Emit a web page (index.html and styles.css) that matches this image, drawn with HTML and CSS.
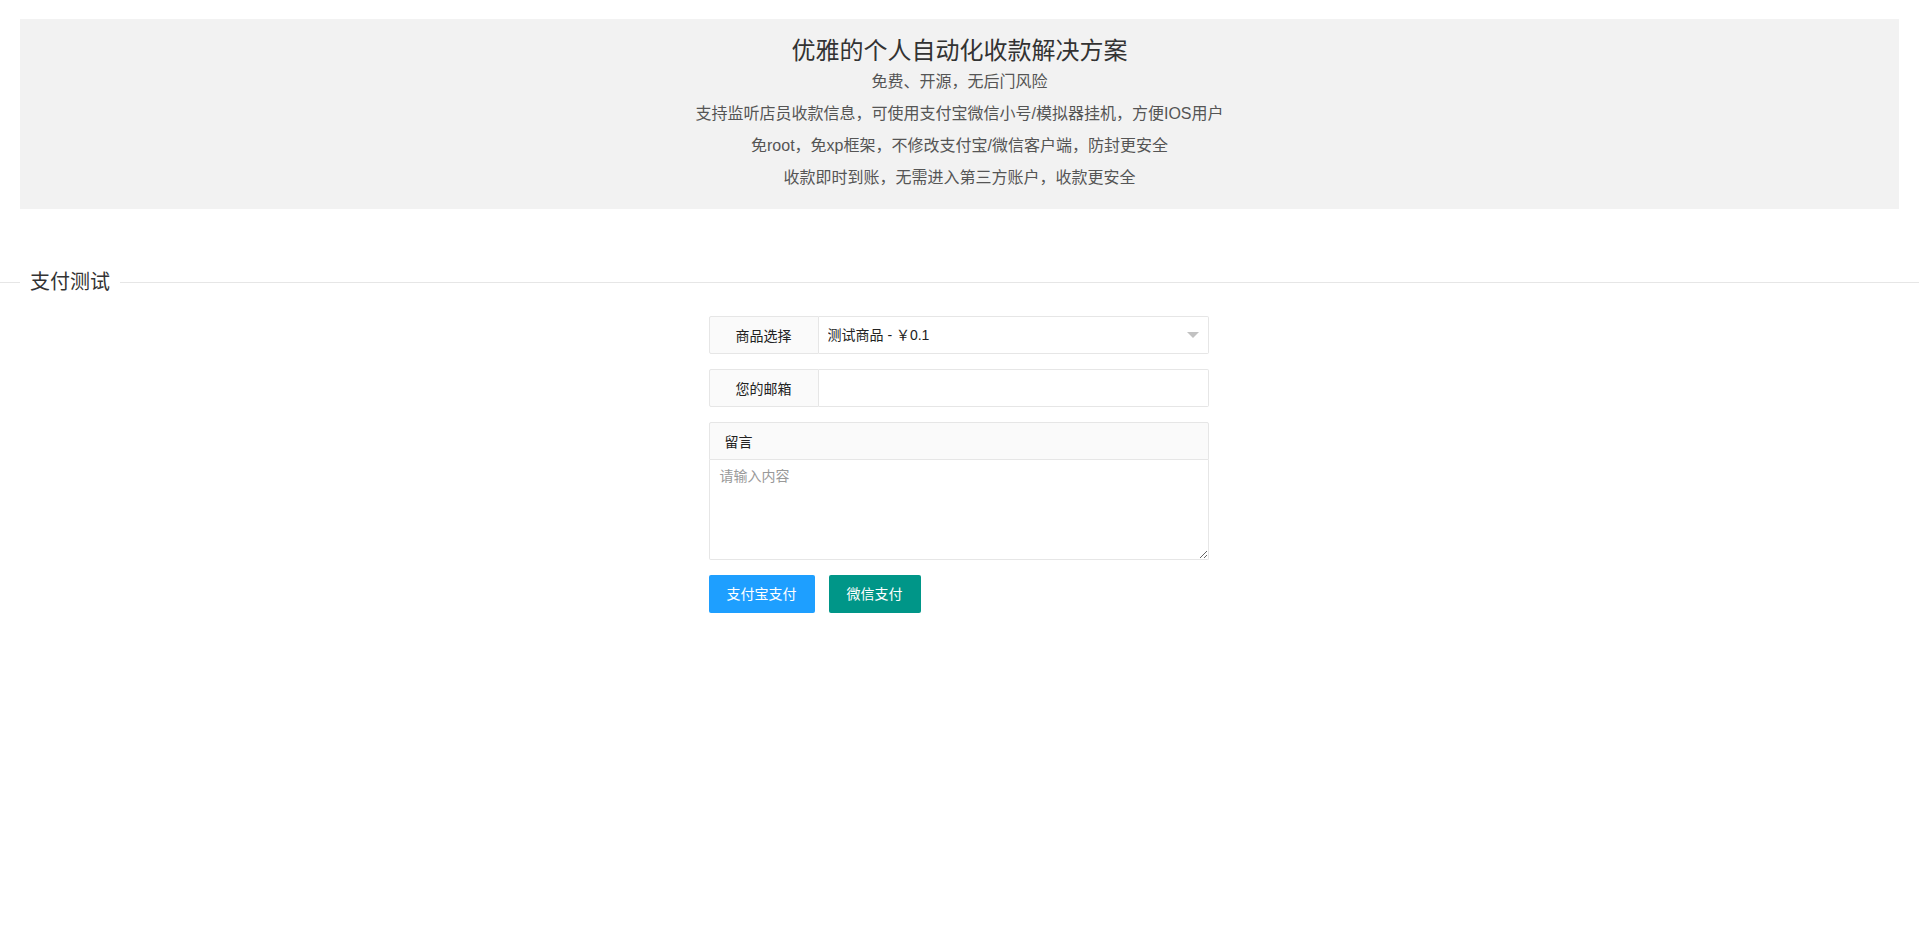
FILE: index.html
```html
<!DOCTYPE html>
<html lang="zh-CN">
<head>
    <meta charset="UTF-8">
    <title>支付测试</title>
    <link rel="stylesheet" href="styles.css">
</head>
<body>

<div class="intro">
    <h2>优雅的个人自动化收款解决方案</h2>
    <p>免费、开源，无后门风险</p>
    <p>支持监听店员收款信息，可使用支付宝微信小号/模拟器挂机，方便IOS用户</p>
    <p>免root，免xp框架，不修改支付宝/微信客户端，防封更安全</p>
    <p>收款即时到账，无需进入第三方账户，收款更安全</p>
</div>

<fieldset class="field-title">
    <legend>支付测试</legend>
</fieldset>

<form class="pay-form" action="#">
    <div class="form-item">
        <label class="form-label">商品选择</label>
        <div class="input-block select-wrap">
            <select name="goods" class="input">
                <option value="1">测试商品 - ￥0.1</option>
            </select>
            <i class="edge"></i>
        </div>
    </div>
    <div class="form-item">
        <label class="form-label">您的邮箱</label>
        <div class="input-block">
            <input type="text" name="email" class="input" autocomplete="off">
        </div>
    </div>
    <div class="form-item form-text">
        <label class="form-label">留言</label>
        <textarea name="remark" class="textarea" placeholder="请输入内容"></textarea>
    </div>
    <div class="form-buttons">
        <button type="button" class="btn btn-normal">支付宝支付</button>
        <button type="button" class="btn">微信支付</button>
    </div>
</form>

</body>
</html>
```

FILE: styles.css
```css
* {
    box-sizing: border-box;
}

body {
    margin: 0;
    font-family: "Liberation Sans", "Noto Sans CJK SC", sans-serif;
    font-size: 14px;
    color: #333;
}

.intro {
    margin: 19px 20px 0;
    padding: 15px;
    background: #f2f2f2;
    text-align: center;
    color: #555;
}

.intro h2 {
    margin: 0;
    padding-top: 2px;
    font-size: 24px;
    font-weight: 400;
    line-height: 30px;
    color: #333;
}

.intro p {
    margin: 0;
    font-size: 16px;
    line-height: 32px;
}

.field-title {
    margin: 58px 0 19px;
    padding: 0;
    border: 0;
    border-top: 1px solid #e6e6e6;
}

.field-title legend {
    margin-left: 20px;
    padding: 0 10px;
    font-size: 20px;
    font-weight: 400;
    line-height: 30px;
    color: #333;
}

.pay-form {
    width: 500px;
    margin-left: calc(50% - 251px);
}

.form-item {
    display: flex;
    margin-bottom: 15px;
}

.form-label {
    width: 110px;
    height: 38px;
    padding: 9px 15px;
    line-height: 20px;
    text-align: center;
    background: #fafafa;
    border: 1px solid #e6e6e6;
    border-radius: 2px 0 0 2px;
    color: #222;
}

.input-block {
    flex: 1;
    position: relative;
}

.input {
    display: block;
    width: 100%;
    height: 38px;
    padding: 0 10px;
    border: 1px solid #e6e6e6;
    border-left: 0;
    border-radius: 0 2px 2px 0;
    background: #fff;
    font-family: inherit;
    font-size: 14px;
    color: #222;
    outline: none;
}

select.input {
    -webkit-appearance: none;
    appearance: none;
    padding-left: 9px;
}

.edge {
    position: absolute;
    right: 10px;
    top: 16px;
    width: 0;
    height: 0;
    border-width: 6px 6px 0;
    border-style: solid;
    border-color: #c2c2c2 transparent transparent;
    pointer-events: none;
}

.form-text {
    flex-direction: column;
}

.form-text .form-label {
    width: 100%;
    text-align: left;
    border-radius: 2px 2px 0 0;
}

.textarea {
    display: block;
    width: 100%;
    height: 100px;
    padding: 6px 10px;
    line-height: 20px;
    border: 1px solid #e6e6e6;
    border-top: 0;
    border-radius: 0 0 2px 2px;
    font-family: inherit;
    font-size: 14px;
    color: #333;
    outline: none;
}

.textarea::placeholder {
    color: #999;
}

.form-buttons {
    display: flex;
    gap: 14px;
}

.btn {
    height: 38px;
    line-height: 38px;
    padding: 0 18px;
    border: 0;
    border-radius: 2px;
    background: #009688;
    color: #fff;
    font-family: inherit;
    font-size: 14px;
    cursor: pointer;
}

.btn-normal {
    background: #1e9fff;
}
```
